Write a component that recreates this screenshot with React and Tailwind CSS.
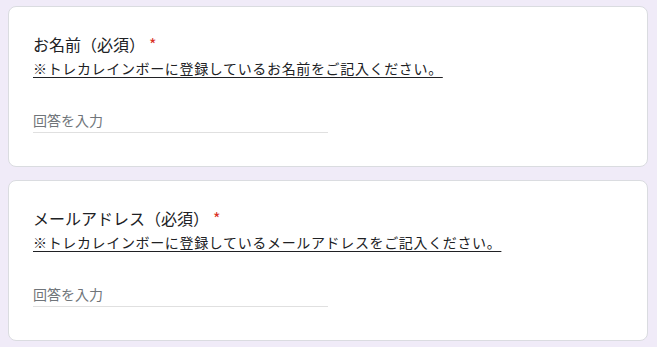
import React from "react";

const font = { fontFamily: '"Noto Sans CJK JP", "Noto Sans", sans-serif' };

function Question({ title, desc }) {
  return (
    <div className="bg-white border border-[#dadce0] rounded-[8px] pl-[24px] pt-[24px] pb-[33px]">
      <div className="text-[16px] leading-[26px] text-[#202124] flex items-center">
        <span>{title}</span>
        <span className="text-[#d93025] ml-[4px]">*</span>
      </div>
      <div className="mt-[1px] text-[14px] leading-[21px] tracking-[0.65px] text-[#202124]">
        <span className="underline underline-offset-[3px] decoration-[1px]">{desc}</span>
      </div>
      <div className="mt-[31px] w-[295px] pb-[2px] border-b border-[#e0e0e0] text-[14px] leading-[20px] text-[#70757a]">
        回答を入力
      </div>
    </div>
  );
}

export default function App() {
  return (
    <div className="min-h-[347px] bg-[#f0ebf8] pl-[8px] pr-[9px] pt-[6px] flex flex-col gap-[13px]" style={font}>
      <Question
        title="お名前（必須）"
        desc="※トレカレインボーに登録しているお名前をご記入ください。 "
      />
      <Question
        title="メールアドレス（必須）"
        desc="※トレカレインボーに登録しているメールアドレスをご記入ください。 "
      />
    </div>
  );
}
